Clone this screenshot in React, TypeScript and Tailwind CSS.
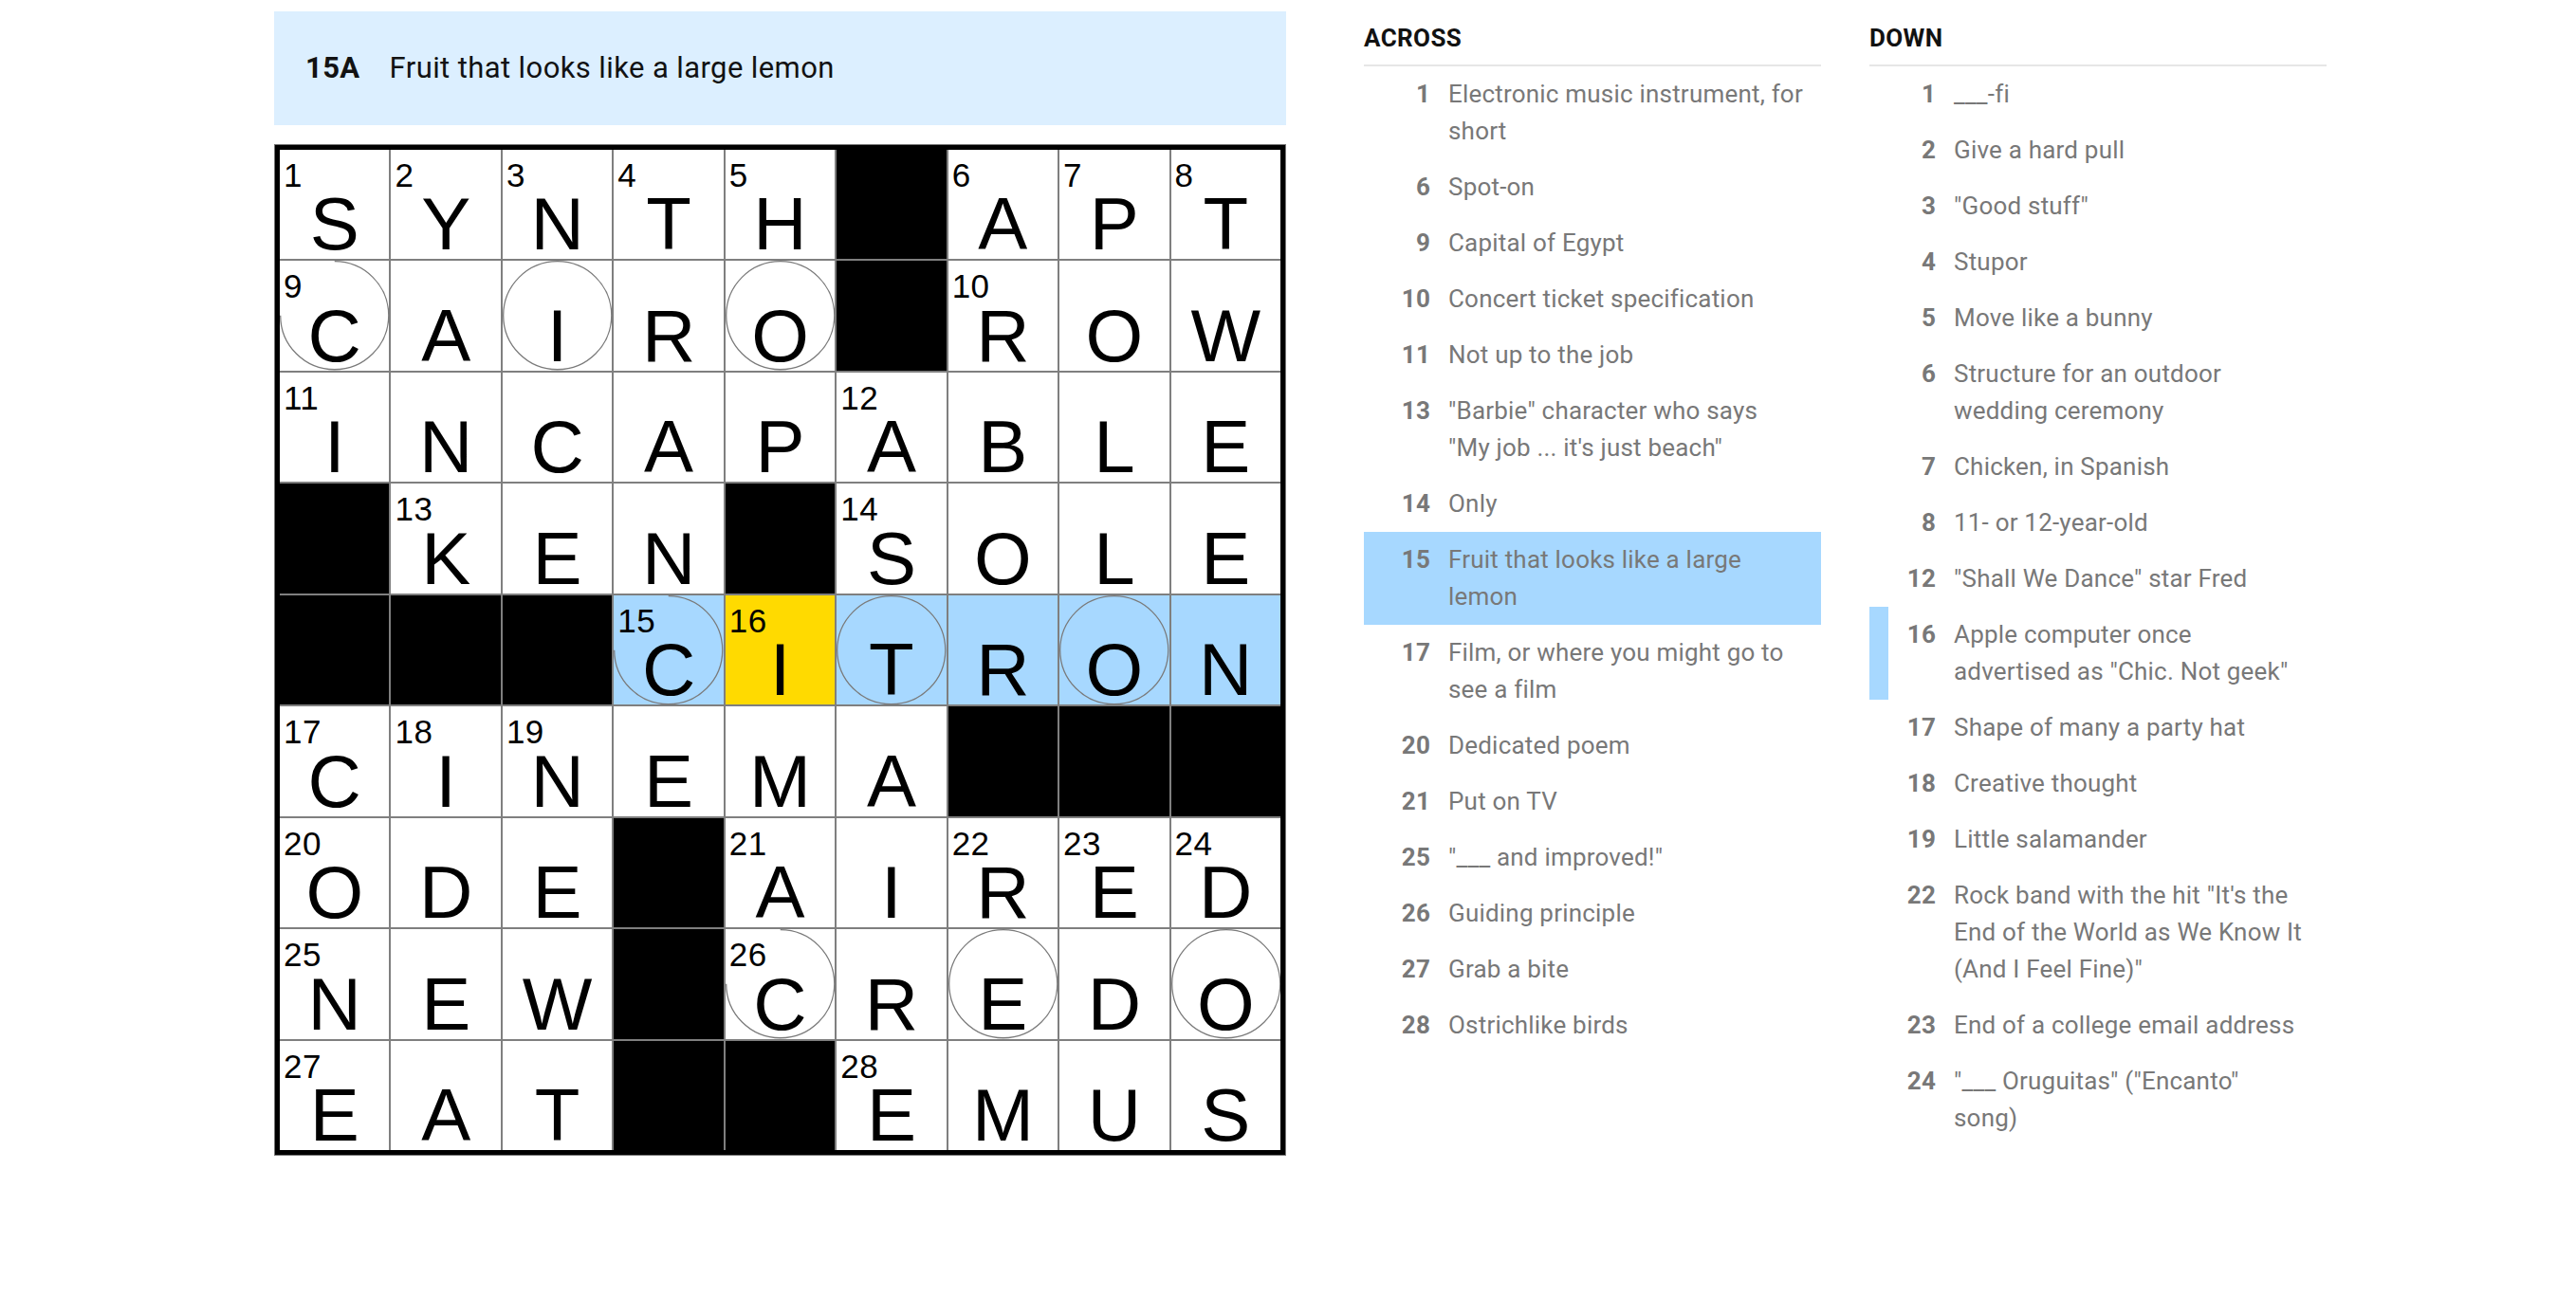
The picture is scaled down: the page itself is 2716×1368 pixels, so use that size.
import { FC } from "react";

// 9x9 board, "#" marks a block
const GRID = [
  "SYNTH#APT",
  "CAIRO#ROW",
  "INCAPABLE",
  "#KEN#SOLE",
  "###CITRON",
  "CINEMA###",
  "ODE#AIRED",
  "NEW#CREDO",
  "EAT##EMUS",
];

const CIRCLED = new Set(["1-0", "1-2", "1-4", "4-3", "4-5", "4-7", "7-4", "7-6", "7-8"]);

const SELECTED = { row: 4, col: 4 };
const WORD = { row: 4, from: 3, to: 8 };

// line breaks are kept as laid out in the clue panel
type Clue = { num: number; text: string; active?: boolean; cross?: boolean };

const ACROSS: Clue[] = [
  { num: 1, text: "Electronic music instrument, for\nshort" },
  { num: 6, text: "Spot-on" },
  { num: 9, text: "Capital of Egypt" },
  { num: 10, text: "Concert ticket specification" },
  { num: 11, text: "Not up to the job" },
  { num: 13, text: "\"Barbie\" character who says\n\"My job ... it's just beach\"" },
  { num: 14, text: "Only" },
  { num: 15, text: "Fruit that looks like a large\nlemon", active: true },
  { num: 17, text: "Film, or where you might go to\nsee a film" },
  { num: 20, text: "Dedicated poem" },
  { num: 21, text: "Put on TV" },
  { num: 25, text: "\"___ and improved!\"" },
  { num: 26, text: "Guiding principle" },
  { num: 27, text: "Grab a bite" },
  { num: 28, text: "Ostrichlike birds" },
];

const DOWN: Clue[] = [
  { num: 1, text: "___-fi" },
  { num: 2, text: "Give a hard pull" },
  { num: 3, text: "\"Good stuff\"" },
  { num: 4, text: "Stupor" },
  { num: 5, text: "Move like a bunny" },
  { num: 6, text: "Structure for an outdoor\nwedding ceremony" },
  { num: 7, text: "Chicken, in Spanish" },
  { num: 8, text: "11- or 12-year-old" },
  { num: 12, text: "\"Shall We Dance\" star Fred" },
  { num: 16, text: "Apple computer once\nadvertised as \"Chic. Not geek\"", cross: true },
  { num: 17, text: "Shape of many a party hat" },
  { num: 18, text: "Creative thought" },
  { num: 19, text: "Little salamander" },
  {
    num: 22,
    text: "Rock band with the hit \"It's the\nEnd of the World as We Know It\n(And I Feel Fine)\"",
  },
  { num: 23, text: "End of a college email address" },
  { num: 24, text: "\"___ Oruguitas\" (\"Encanto\"\nsong)" },
];

const isBlock = (r: number, c: number) =>
  r < 0 || c < 0 || r > 8 || c > 8 || GRID[r][c] === "#";

// standard numbering: a white cell starting an across or down entry
function numberGrid() {
  const nums: (number | null)[][] = [];
  let n = 0;
  for (let r = 0; r < 9; r++) {
    nums.push([]);
    for (let c = 0; c < 9; c++) {
      if (isBlock(r, c)) {
        nums[r].push(null);
        continue;
      }
      const across = isBlock(r, c - 1) && !isBlock(r, c + 1);
      const down = isBlock(r - 1, c) && !isBlock(r + 1, c);
      nums[r].push(across || down ? ++n : null);
    }
  }
  return nums;
}

// numbered cells leave the top-left quarter of the ring open for the label
const Ring: FC<{ open: boolean }> = ({ open }) => (
  <svg viewBox="0 0 100 100" className="absolute inset-0 h-full w-full" fill="none">
    {open ? (
      <path d="M50 0.6 A49.4 49.4 0 1 1 0.6 50" stroke="#7a7a7a" strokeWidth="1.1" />
    ) : (
      <circle cx="50" cy="50" r="49.4" stroke="#7a7a7a" strokeWidth="1.1" />
    )}
  </svg>
);

const Board: FC = () => {
  const nums = numberGrid();
  return (
    <div className="h-[1067px] w-[1067px] border border-[#777]">
      <div className="h-full w-full border-[5px] border-black">
        <div className="grid h-full grid-cols-9 grid-rows-9 gap-[2px] bg-[#7f7f7f] font-['Liberation_Sans',Arial,sans-serif] text-black">
          {GRID.flatMap((row, r) =>
            row.split("").map((ch, c) => {
              if (ch === "#") return <div key={`${r}-${c}`} className="bg-black" />;
              const selected = r === SELECTED.row && c === SELECTED.col;
              const inWord = r === WORD.row && c >= WORD.from && c <= WORD.to;
              const bg = selected ? "bg-[#ffda00]" : inWord ? "bg-[#a7d8ff]" : "bg-white";
              const num = nums[r][c];
              return (
                <div key={`${r}-${c}`} className={`relative ${bg}`}>
                  {CIRCLED.has(`${r}-${c}`) && <Ring open={num !== null} />}
                  {num !== null && (
                    <span className="absolute left-[4px] top-[9px] text-[35px] leading-none tracking-[0.5px]">
                      {num}
                    </span>
                  )}
                  <div className="flex h-full items-end justify-center pb-[4px] text-[78px] leading-[66px]">
                    {ch}
                  </div>
                </div>
              );
            })
          )}
        </div>
      </div>
    </div>
  );
};

const ClueList: FC<{ title: string; clues: Clue[] }> = ({ title, clues }) => (
  <section className="w-[482px]">
    <h3 className="border-b-2 border-[#e6e6e6] pb-[10px] pt-[22px] text-[26px] font-bold uppercase leading-[36px] tracking-[0.4px] text-[#121212]">
      {title}
    </h3>
    <ul>
      {clues.map((clue) => (
        <li
          key={clue.num}
          className={`flex text-[26px] leading-[39px] tracking-[0.2px] text-[#787878] ${clue.active ? "bg-[#a7d8ff]" : ""}`}
        >
          <span className={`w-[20px] shrink-0 ${clue.cross ? "bg-[#a7d8ff]" : ""}`} />
          <span className="w-[50px] shrink-0 py-[10px] text-right font-bold">{clue.num}</span>
          <span className="whitespace-pre-line py-[10px] pl-[19px] pr-[4px]">{clue.text}</span>
        </li>
      ))}
    </ul>
  </section>
);

export default function App() {
  return (
    <div className="flex min-h-screen items-start bg-white pl-[289px] font-['Roboto',sans-serif]">
      <div className="mt-[12px] flex w-[1067px] flex-col gap-[20px]">
        <div className="flex h-[120px] items-center bg-[#dcefff] pl-[33px] text-[31px] tracking-[0.4px] text-[#121212]">
          <span className="mr-[31px] font-bold">15A</span>
          <span>Fruit that looks like a large lemon</span>
        </div>
        <Board />
      </div>
      <div className="ml-[82px] flex gap-[51px]">
        <ClueList title="Across" clues={ACROSS} />
        <ClueList title="Down" clues={DOWN} />
      </div>
    </div>
  );
}
